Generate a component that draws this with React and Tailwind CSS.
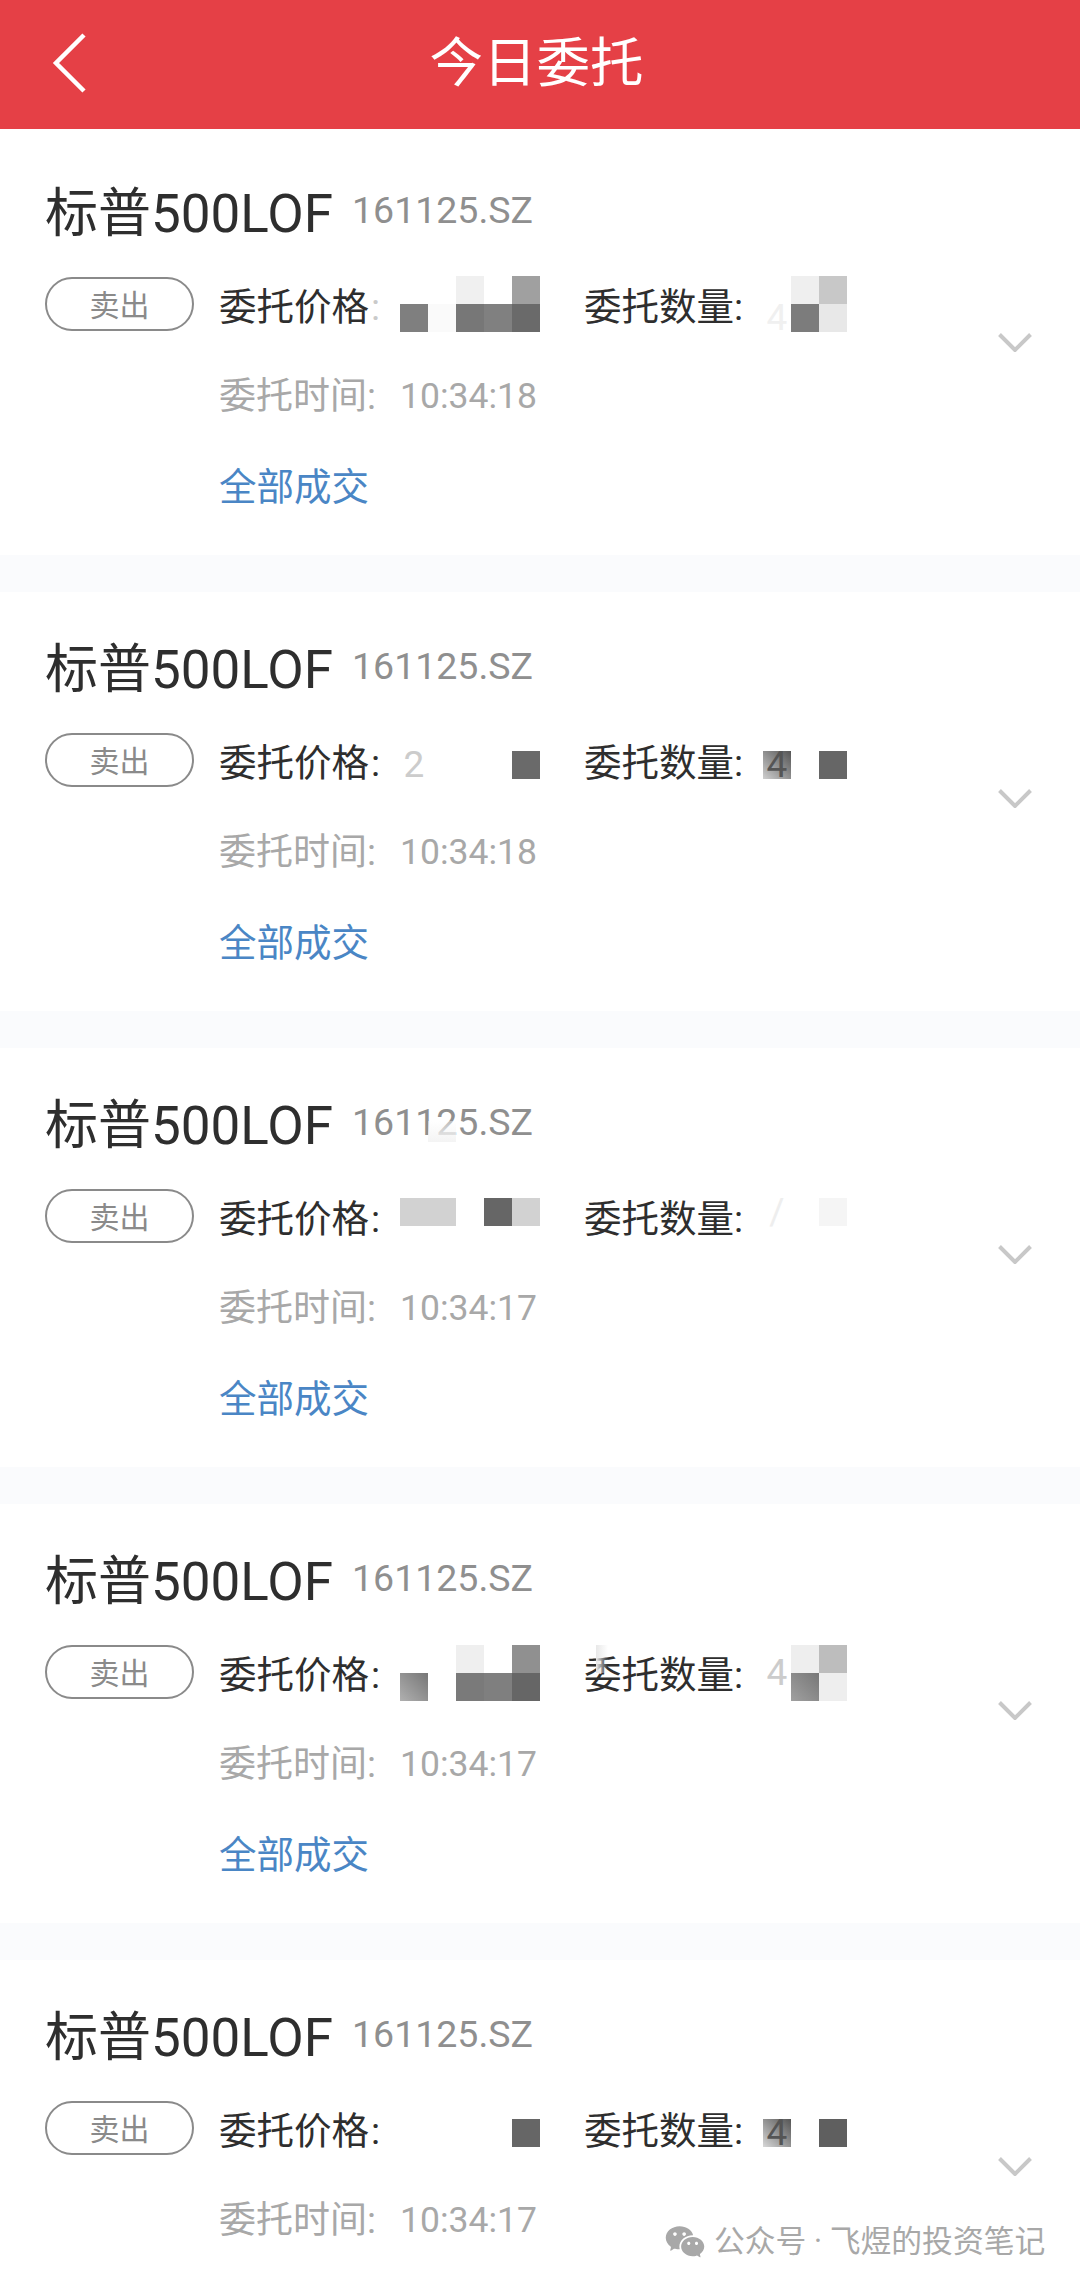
import React from 'react'
import { RiWechatFill } from 'react-icons/ri'

// redacted mosaic blocks: each cell is 28x28
const orders = [
  {
    time: '10:34:18',
    priceTop: 'top-[-2px]',
    price: [
      { bg: 'bg-white/75' }, {}, {}, { bg: 'bg-[#f0f0f0]' }, {}, { bg: 'bg-[#a0a0a0]' },
      { bg: 'bg-white/75' }, { bg: 'bg-[#7f7f7f]' }, { bg: 'bg-[#fafafa]' }, { bg: 'bg-[#777777]' }, { bg: 'bg-[#808080]' }, { bg: 'bg-[#6a6a6a]' },
    ],
    qty: [
      {}, { bg: 'bg-[#efefef]' }, { bg: 'bg-[#c8c8c8]' },
      { text: '4', color: 'text-[#f0f0f0]' }, { bg: 'bg-[#7c7c7c]' }, { bg: 'bg-[#e8e8e8]' },
    ],
  },
  {
    time: '10:34:18',
    priceTop: 'top-[17px]',
    price: [
      {}, { text: '2', color: 'text-[#cccccc]' }, {}, {}, {}, { bg: 'bg-[#6a6a6a]' },
    ],
    qty: [
      { bg: 'bg-linear-to-bl from-[#555555] to-[#cfcfcf]', text: '4', color: 'text-[#555555]' }, {}, { bg: 'bg-[#666666]' },
    ],
  },
  {
    time: '10:34:17',
    priceTop: 'top-[8px]',
    codePatch: true,
    price: [
      {}, { bg: 'bg-[#d2d2d2]' }, { bg: 'bg-[#d2d2d2]' }, {}, { bg: 'bg-[#666666]' }, { bg: 'bg-[#d2d2d2]' },
    ],
    qty: [
      { text: '/', color: 'text-[#eeeeee]' }, {}, { bg: 'bg-[#f5f5f5]' },
    ],
  },
  {
    time: '10:34:17',
    priceTop: 'top-[-1px]',
    labelPatch: true,
    price: [
      {}, {}, {}, { bg: 'bg-[#efefef]' }, {}, { bg: 'bg-[#909090]' },
      {}, { bg: 'bg-linear-to-tr from-[#b0b0b0] to-[#777777]' }, {}, { bg: 'bg-[#7a7a7a]' }, { bg: 'bg-[#7f7f7f]' }, { bg: 'bg-[#666666]' },
    ],
    qty: [
      {}, { bg: 'bg-[#eeeeee]' }, { bg: 'bg-[#bdbdbd]' },
      { text: '4', color: 'text-[#cccccc] relative -top-[14px]' }, { bg: 'bg-linear-to-tr from-[#a0a0a0] to-[#777777]' }, { bg: 'bg-[#eeeeee]' },
    ],
  },
  {
    time: '10:34:17',
    priceTop: 'top-[17px]',
    noStatus: true,
    price: [
      {}, {}, {}, {}, {}, { bg: 'bg-[#666666]' },
    ],
    qty: [
      { bg: 'bg-linear-to-bl from-[#555555] to-[#d8d8d8]', text: '4', color: 'text-[#555555]' }, {}, { bg: 'bg-[#5f5f5f]' },
    ],
  },
]

const Mosaic = ({ cells, cols, top }) => (
  <div className={`absolute left-0 grid ${cols} auto-rows-[28px] ${top}`}>
    {cells.map((c, i) => (
      <div
        key={i}
        className={`w-[28px] h-[28px] flex items-center justify-center text-[37px] leading-[28px] ${c.bg || ''} ${c.color || ''}`}
      >
        {c.text}
      </div>
    ))}
  </div>
)

const OrderCard = ({ order }) => (
  <div className="h-[419px] shrink-0 bg-white flex items-center pl-[45px] pr-[48px]">
    <div className="flex-1 h-full pt-[48px]">
      {/* name + code */}
      <div className="relative h-[60px] flex items-center">
        <span className="text-[53px] leading-[60px] text-[#2e2e2e]">标普500LOF</span>
        <span className="ml-[19px] mb-[8px] text-[37.5px] leading-[44px] text-[#8f8f8f]">161125.SZ</span>
        {order.codePatch && (
          <div className="absolute left-[383px] top-[25px] w-[28px] h-[21px] bg-linear-to-b from-white/40 to-[#f4f4f4]" />
        )}
      </div>

      {/* side + price + quantity */}
      <div className="relative mt-[34px] h-[56px] flex">
        <div className="w-[149px] h-[54px] -mt-px pt-[4px] shrink-0 rounded-full border-2 border-[#8a8a8a] flex items-center justify-center text-[30px] leading-[40px] text-[#8a8a8a]">
          卖出
        </div>
        <div className="ml-[25px] w-[153px] text-[37.5px] leading-[59px] text-[#2e2e2e] whitespace-nowrap">
          委托价格<span className="ml-[2px]">:</span>
        </div>
        <div className="relative w-[168px]">
          <Mosaic cells={order.price} cols="grid-cols-[repeat(6,28px)]" top={order.priceTop} />
        </div>
        <div className="ml-[44px] w-[179px] text-[37.5px] leading-[59px] text-[#2e2e2e] whitespace-nowrap">
          委托数量:
        </div>
        <div className="relative w-[84px]">
          <Mosaic cells={order.qty} cols="grid-cols-[repeat(3,28px)]" top={order.priceTop} />
        </div>
        {order.labelPatch && (
          <div className="absolute left-[551px] top-[-1px] w-[12px] h-[28px] bg-linear-to-r from-[#e8e8e8] to-white/0" />
        )}
      </div>

      <div className="mt-[35px] h-[56px] pl-[174px] flex items-center text-[37px] text-[#a8a8a8]">
        <span className="w-[181px]">委托时间:</span>
        <span className="text-[35.5px]">{order.time}</span>
      </div>

      {!order.noStatus && (
        <div className="mt-[34px] h-[56px] pl-[174px] flex items-center text-[37.5px] text-[#4a86c5]">全部成交</div>
      )}
    </div>

    <svg width="34" height="19" viewBox="0 0 34 19" fill="none" className="shrink-0 mb-[7px]">
      <path d="M1.5 1.5 L17 17 L32.5 1.5" stroke="#c8c8c8" strokeWidth="4" />
    </svg>
  </div>
)

const App = () => {
  return (
    <div
      className="relative w-[1080px] h-[2284px] overflow-hidden bg-[#fafbfd] flex flex-col"
      style={{ fontFamily: 'Roboto, "Noto Sans CJK SC", sans-serif' }}
    >
      {/* Header */}
      <header className="h-[129px] shrink-0 bg-[#e54046] relative flex items-center justify-center pr-[7px]">
        <svg width="36" height="60" viewBox="0 0 36 60" fill="none" className="absolute left-[52px] top-[33px]">
          <path d="M32 2 L4 30 L32 58" stroke="white" strokeWidth="4.5" />
        </svg>
        <h1 className="text-[53.5px] text-white">今日委托</h1>
      </header>
      <div className="h-[7px] shrink-0 bg-white" />

      {/* Orders */}
      <div className="flex flex-col gap-[37px]">
        {orders.map((order, i) => (
          <OrderCard key={i} order={order} />
        ))}
      </div>

      {/* Watermark */}
      <div className="absolute left-[664px] top-[2221px] flex items-center gap-[8px] text-[30.8px] leading-[38px] text-[#a8a8a8] whitespace-nowrap">
        <RiWechatFill className="w-[42px] h-[42px] text-[#a8a8a8]" />
        <span>公众号 · 飞煜的投资笔记</span>
      </div>
    </div>
  )
}

export default App
